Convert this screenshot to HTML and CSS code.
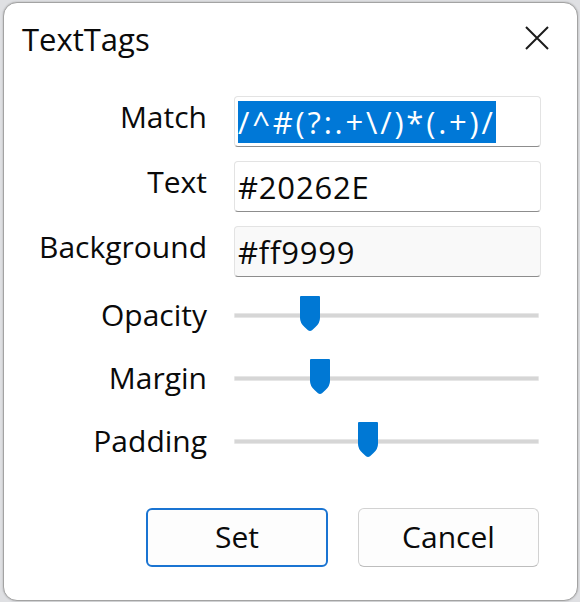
FILE: index.html
```html
<!DOCTYPE html>
<html>
<head>
<meta charset="utf-8">
<link rel="stylesheet" href="styles.css">
</head>
<body>
<div class="window">
  <div class="titlebar">
    <div class="title">TextTags</div>
    <svg class="close" width="24" height="24" viewBox="0 0 24 24"><path d="M1 1 L23 23 M23 1 L1 23" stroke="#1b1b1b" stroke-width="2" fill="none"/></svg>
  </div>
  <div class="form">
    <div class="label">Match</div>
    <div class="field"><span class="sel">/^#(?:.+\/)*(.+)/</span></div>
    <div class="label">Text</div>
    <div class="field">#20262E</div>
    <div class="label">Background</div>
    <div class="field alt">#ff9999</div>
    <div class="label slabel">Opacity</div>
    <div class="slider"><div class="track"><span class="thumb" style="left:65px"></span></div></div>
    <div class="label slabel">Margin</div>
    <div class="slider"><div class="track"><span class="thumb" style="left:75px"></span></div></div>
    <div class="label slabel">Padding</div>
    <div class="slider"><div class="track"><span class="thumb" style="left:123px"></span></div></div>
  </div>
  <div class="buttons">
    <div class="btn primary">Set</div>
    <div class="btn">Cancel</div>
  </div>
</div>
</body>
</html>
```
FILE: styles.css
```css
html, body {
  margin: 0;
  padding: 0;
}
body {
  width: 580px;
  height: 602px;
  background: #dfe0e3;
  font-family: "Open Sans", "Noto Sans", sans-serif;
  color: #0a0a0a;
  overflow: hidden;
}
.window {
  box-sizing: border-box;
  margin: 2px 0 0 3px;
  width: 575px;
  height: 599px;
  background: #fff;
  border: 1px solid #a3a3a3;
  border-radius: 14px;
  box-shadow: 0 0 2px rgba(0,0,0,0.25);
  display: flex;
  flex-direction: column;
}
.titlebar {
  display: flex;
  justify-content: space-between;
  align-items: center;
  padding: 16px 28px 0 18px;
}
.title {
  font-size: 31px;
  line-height: 40px;
}
.close {
  display: block;
  margin-top: -2px;
}
.form {
  margin-top: 37px;
  display: grid;
  grid-template-columns: 203px 307px;
  grid-template-rows: 51px 51px 51px 49px 49px 49px;
  column-gap: 27px;
  row-gap: 14px;
}
.label {
  font-size: 30px;
  line-height: 40px;
  text-align: right;
  align-self: center;
  padding-bottom: 10px;
}
.label.slabel {
  padding-bottom: 2px;
}
.field {
  box-sizing: border-box;
  height: 51px;
  border: 1px solid #e3e3e3;
  border-bottom: 1px solid #8d8d8d;
  border-radius: 4px;
  background: #fff;
  padding: 0 3px;
  font-size: 31px;
  letter-spacing: 0.8px;
  line-height: 42px;
  display: flex;
  align-items: center;
  white-space: nowrap;
  overflow: hidden;
}
.field.alt {
  background: #f9f9f9;
}
.sel {
  background: #0078d7;
  color: #fff;
  letter-spacing: 2.8px;
}
.slider {
  display: flex;
  align-items: center;
}
.track {
  position: relative;
  box-sizing: border-box;
  width: 305px;
  height: 5px;
  background: #d6d6d6;
  border: 1px solid #e6e6e6;
  border-radius: 1px;
}
.thumb {
  position: absolute;
  top: -18px;
  width: 20px;
  height: 35px;
  background: #0078d4;
  clip-path: path("M1 0 H19 Q20 0 20 1 V22 Q20 27 15.5 31 L12 34.2 Q10 35.6 8 34.2 L4.5 31 Q0 27 0 22 V1 Q0 0 1 0 Z");
}
.buttons {
  margin-top: 42px;
  display: flex;
  justify-content: flex-end;
  gap: 30px;
  padding-right: 38px;
}
.btn {
  box-sizing: border-box;
  width: 181px;
  height: 59px;
  border: 1px solid #d2d2d2;
  border-bottom-color: #bdbdbd;
  border-radius: 6px;
  background: #fdfdfd;
  font-size: 30px;
  display: flex;
  align-items: center;
  justify-content: center;
  padding-bottom: 2px;
}
.btn.primary {
  width: 182px;
  border: 2px solid #1a74d2;
}
```
